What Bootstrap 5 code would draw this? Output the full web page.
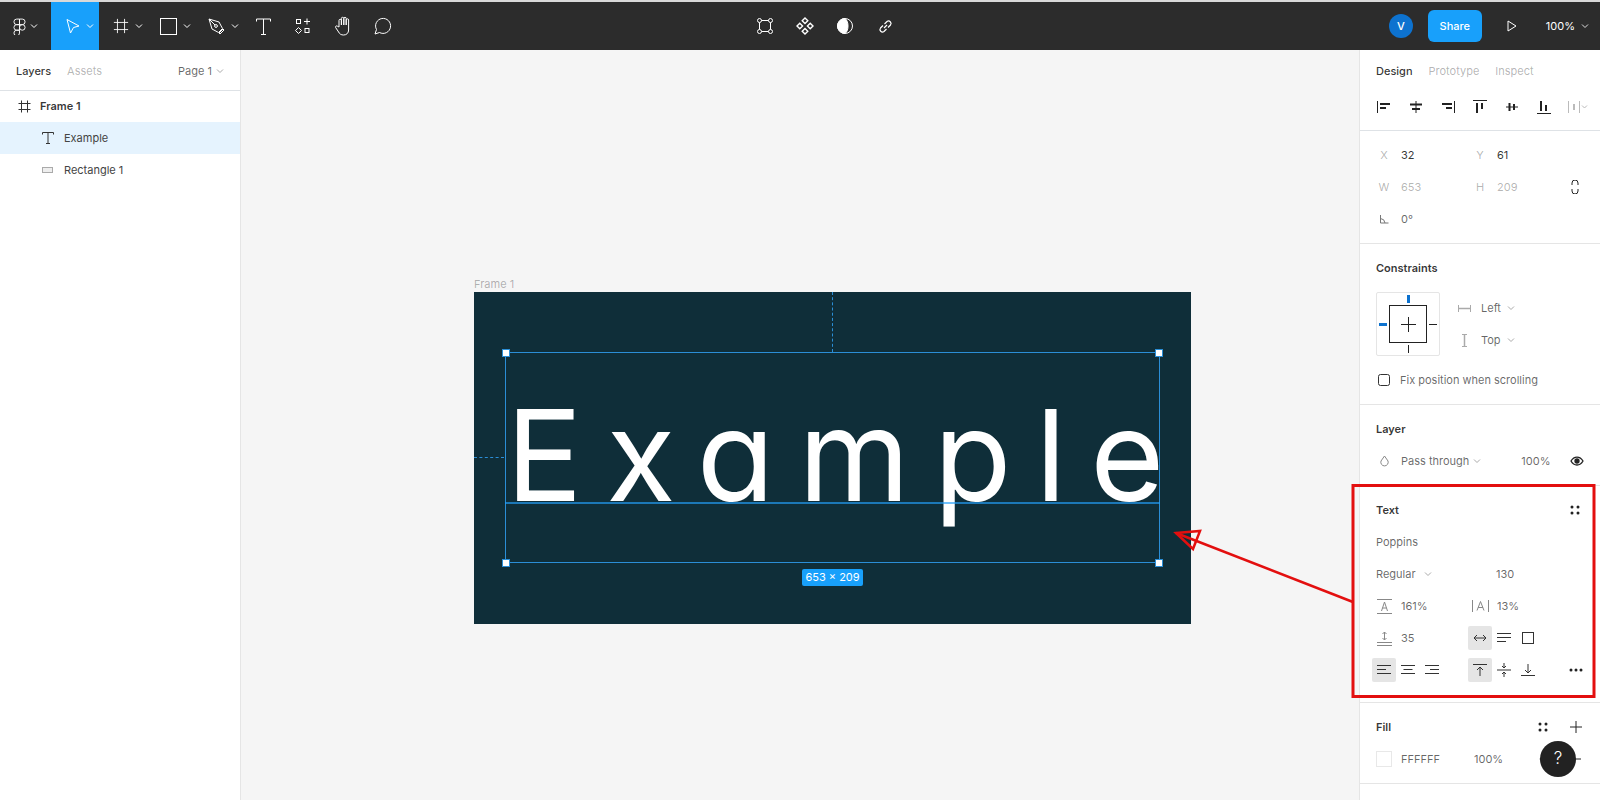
<!DOCTYPE html>
<html lang="en">
<head>
<meta charset="UTF-8">
<title>Figma - Text</title>
<link href="https://cdn.jsdelivr.net/npm/bootstrap@5.3.3/dist/css/bootstrap.min.css" rel="stylesheet">
<script src="https://cdn.jsdelivr.net/npm/bootstrap@5.3.3/dist/js/bootstrap.bundle.min.js"></script>
<style>
    html, body { height: 100%; overflow: hidden; }
    body { font-family: Inter, "Liberation Sans", sans-serif; font-size: 11px; color: rgba(0,0,0,.8); background: #fff; position: relative; }
    svg { display: block; flex: none; }
    .top-line { height: 2px; background: #d9d9d9; }
    .toolbar { height: 48px; background: #2c2c2c; color: #fff; }
    .tool { height: 48px; display: flex; align-items: center; justify-content: center; gap: 4px; }
    .tool-w { width: 48px; justify-content: flex-start; padding-left: 13px; gap: 6px; }
    .tool-s { width: 40px; }
    .tool-active { background: #18a0fb; padding-left: 14px; gap: 5px; }
    .tools-left { width: 745px; }
    .avatar-dot { width: 24px; height: 24px; border-radius: 50%; background: #0d72cf; color: #fff; font-weight: 500; font-size: 11px; }
    .share-btn { width: 54px; height: 32px; padding: 0; margin-left: 15px; border: 0; border-radius: 6px; background: #18a0fb; color: #fff; font-size: 11px; font-weight: 500; }
    .zoom-val { margin-left: 4px; color: #fff; font-size: 11px; }
    .work { height: 750px; }
    .side-left { width: 241px; border-right: 1px solid #e5e5e5; background: #fff; }
    .side-right { width: 241px; border-left: 1px solid #e5e5e5; background: #fff; }
    .canvas-area { background: #f5f5f5; position: relative; }
    .tabs-row { height: 41px; padding: 2px 0 0 16px; font-weight: 500; }
    .muted-txt { color: rgba(0,0,0,.3); font-weight: 400; }
    .mid-txt { color: rgba(0,0,0,.6); }
    .layer-row { height: 32px; display: flex; align-items: center; }
    .layer-first { height: 31px; padding-bottom: 1px; }
    .layer-sel { background: #e5f3fe; }
    .sect { border-bottom: 1px solid #e5e5e5; padding: 8px 0; }
    .sect-title { height: 32px; padding: 0 16px; display: flex; align-items: center; justify-content: space-between; font-weight: 600; font-size: 11px; }
    .prop-row { height: 32px; display: flex; align-items: center; padding-left: 16px; }
    .c-label { width: 16px; margin-right: 9px; color: rgba(0,0,0,.3); flex: none; display: flex; justify-content: center; }
    .c-val { width: 71px; flex: none; }
    .ic-box { width: 24px; height: 24px; display: flex; align-items: center; justify-content: center; flex: none; border-radius: 2px; }
    .ic-on { background: #e5e5e5; }
    .constraint-box { width: 64px; height: 64px; border: 1px solid #e5e5e5; border-radius: 2px; flex: none; }
    .dim-txt { color: rgba(0,0,0,.3); }
    .swatch { width: 16px; height: 16px; border: 1px solid #e8e8e8; background: #fff; flex: none; }

    /* artboard pieces sit on a free canvas, offsets are relative to the canvas area */
    .frame-name { position: absolute; left: 233px; top: 227px; color: rgba(0,0,0,.3); line-height: 14px; }
    .artboard { position: absolute; left: 233px; top: 242px; width: 717px; height: 332px; background: #0f2e39; overflow: hidden; }
    .sample-txt { position: absolute; left: 32px; top: 100px; line-height: 1; color: #fff; font-family: Inter, sans-serif; font-feature-settings: "cv11"; font-size: 127px; font-weight: 400; white-space: nowrap; letter-spacing: 24px; }
    .sel-box { position: absolute; left: 31px; top: 60px; width: 655px; height: 211px; border: 1px solid #2b8ed6; }
    .baseline { position: absolute; left: 31px; top: 210px; width: 655px; height: 2px; background: rgba(36,160,251,.65); }
    .handle { position: absolute; width: 8px; height: 8px; background: #fff; border: 1px solid #2b8ed6; }
    .guide-v { position: absolute; left: 358px; top: 0; height: 60px; border-left: 1px dashed #2b8ed6; }
    .guide-h { position: absolute; left: 0; top: 165px; width: 30px; border-top: 1px dashed #2b8ed6; }
    .size-tag { position: absolute; left: 328px; top: 277px; width: 61px; height: 17px; line-height: 17px; text-align: center; background: #18a0fb; color: #fff; border-radius: 2px; font-size: 11px; }
    .overlay-art { position: absolute; left: 0; top: 0; pointer-events: none; }
    .help-dot { position: absolute; left: 1540px; top: 741px; width: 36px; height: 36px; border-radius: 50%; background: #222; color: #fff; font-size: 17px; font-weight: 300; }
</style>
</head>
<body>
<div class="top-line"></div>

<!-- Toolbar -->
<div class="toolbar d-flex align-items-center">
    <div class="tools-left d-flex">
        <div class="tool" style="width:51px">
            <svg width="13" height="17" viewBox="0 0 14 18" fill="none" stroke="#fff" stroke-width="1"><path d="M7 1H4a3 3 0 0 0 0 6h3zM7 1h3a3 3 0 0 1 0 6H7zM7 7H4a3 3 0 0 0 0 6h3zM13 10a3 3 0 1 1-6 0 3 3 0 0 1 6 0zM7 13H4a3 3 0 1 0 3 3z"/></svg>
            <svg width="8" height="6" viewBox="0 0 8 6" fill="none" stroke="#fff"><path d="M1 1.500l3 3 3-3"/></svg>
        </div>
        <div class="tool tool-w tool-active">
            <svg width="16" height="16" viewBox="0 0 16 16" fill="none" stroke="#fff"><path d="M2 1.500l12 6.500-5.500 1.500L5.500 15z"/></svg>
            <svg width="8" height="6" viewBox="0 0 8 6" fill="none" stroke="#fff"><path d="M1 1.500l3 3 3-3"/></svg>
        </div>
        <div class="tool tool-w" style="padding-left:14px">
            <svg width="16" height="16" viewBox="0 0 18 18" fill="none" stroke="#fff"><path d="M5 1v16M13 1v16M1 5h16M1 13h16"/></svg>
            <svg width="8" height="6" viewBox="0 0 8 6" fill="none" stroke="#fff"><path d="M1 1.500l3 3 3-3"/></svg>
        </div>
        <div class="tool tool-w">
            <svg width="17" height="17" viewBox="0 0 17 17" fill="none" stroke="#fff"><rect x=".5" y=".5" width="16" height="16"/></svg>
            <svg width="8" height="6" viewBox="0 0 8 6" fill="none" stroke="#fff"><path d="M1 1.500l3 3 3-3"/></svg>
        </div>
        <div class="tool tool-w">
            <svg width="17" height="17" viewBox="0 0 17 17" fill="none" stroke="#fff"><path d="M1 1l10 3 3.500 6.500-4 4L4 11zM1 1l6 6"/><circle cx="8" cy="8" r="1.400"/><path d="M11 15l4-4 1 1-4 4z"/></svg>
            <svg width="8" height="6" viewBox="0 0 8 6" fill="none" stroke="#fff"><path d="M1 1.500l3 3 3-3"/></svg>
        </div>
        <div class="tool tool-s">
            <svg width="15" height="17" viewBox="0 0 15 17" fill="none" stroke="#fff"><path d="M.5 3.500V1h14v2.500M7.500 1v15.500M5 16.500h5"/></svg>
        </div>
        <div class="tool tool-s">
            <svg width="16" height="16" viewBox="0 0 16 16" fill="none" stroke="#fff"><rect x="1.500" y="1.500" width="4" height="4"/><path d="M12 .5v6M9 3.500h6M3.500 9.500l3 3-3 3-3-3z"/><rect x="10" y="10.500" width="4" height="4"/></svg>
        </div>
        <div class="tool tool-s">
            <svg width="19" height="20" viewBox="0 0 19 20" fill="none" stroke="#fff"><path d="M5 11V4.500a1.200 1.200 0 0 1 2.400 0V9V2.500a1.200 1.200 0 0 1 2.400 0V9V2.500a1.200 1.200 0 0 1 2.400 0V9V4a1.200 1.200 0 0 1 2.400 0v10c0 3-2 5-5 5-2.500 0-4-1-5-3l-3-4.500c-.6-1.200 1-2.200 2-1.200z"/></svg>
        </div>
        <div class="tool tool-s">
            <svg width="18" height="18" viewBox="0 0 18 18" fill="none" stroke="#fff"><path d="M1 17l1.500-4.500A7.500 7.500 0 1 1 5.500 15.500z"/></svg>
        </div>
    </div>
    <div class="d-flex">
        <div class="tool tool-s">
            <svg width="16" height="16" viewBox="0 0 16 16" fill="none" stroke="#fff"><path d="M2.500 4.500v7M13.500 4.500v7M4.500 2.500h7M4.500 13.500h7"/><circle cx="2.500" cy="2.500" r="2"/><circle cx="13.500" cy="2.500" r="2"/><circle cx="2.500" cy="13.500" r="2"/><circle cx="13.500" cy="13.500" r="2"/></svg>
        </div>
        <div class="tool tool-s">
            <svg width="18" height="18" viewBox="0 0 18 18" fill="none" stroke="#fff" stroke-width="1.400"><path d="M9 1l2.800 2.800L9 6.600 6.200 3.800zM9 11.400l2.800 2.800L9 17l-2.800-2.800zM3.800 6.200L6.600 9l-2.800 2.800L1 9zM14.200 6.200L17 9l-2.800 2.800L11.400 9z"/></svg>
        </div>
        <div class="tool tool-s">
            <svg width="16" height="16" viewBox="0 0 16 16" fill="none" stroke="#fff"><circle cx="8" cy="8" r="7.500"/><path d="M8 .5a7.500 7.500 0 0 0 0 15c2-1.500 3-4 3-7.500S10 2 8 .5z" fill="#fff"/></svg>
        </div>
        <div class="tool tool-s">
            <svg width="15" height="15" viewBox="0 0 15 15" fill="none" stroke="#fff" stroke-width="1.200"><path d="M6 9l3-3M5 6.500L2.500 9a2.500 2.500 0 0 0 3.500 3.500L8.500 10M6.500 5L9 2.500A2.500 2.500 0 0 1 12.500 6L10 8.500"/></svg>
        </div>
    </div>
    <div class="ms-auto d-flex align-items-center">
        <div class="avatar-dot d-flex align-items-center justify-content-center">V</div>
        <button class="btn share-btn" type="button">Share</button>
        <div class="tool" style="width:60px">
            <svg width="10" height="12" viewBox="0 0 10 12" fill="none" stroke="#fff"><path d="M1 1l8 5-8 5z"/></svg>
        </div>
        <div class="zoom-val">100%</div>
        <div style="margin:0 11px 0 6px">
            <svg width="8" height="6" viewBox="0 0 8 6" fill="none" stroke="#ddd"><path d="M1 1.500l3 3 3-3"/></svg>
        </div>
    </div>
</div>

<div class="work d-flex">
    <!-- Layers panel -->
    <div class="side-left flex-none">
        <div class="tabs-row d-flex align-items-center border-bottom">
            <span>Layers</span>
            <span class="muted-txt ms-3">Assets</span>
            <span class="ms-auto mid-txt fw-normal">Page 1</span>
            <svg class="ms-1 me-3" width="8" height="6" viewBox="0 0 8 6" fill="none" stroke="#aaa"><path d="M1 1.500l3 3 3-3"/></svg>
        </div>
        <div class="layer-row layer-first fw-semibold" style="padding-left:18px">
            <svg width="13" height="13" viewBox="0 0 13 13" fill="none" stroke="#333"><path d="M3.500 .5v12M9.500 .5v12M.5 3.500h12M.5 9.500h12"/></svg>
            <span style="margin-left:9px">Frame 1</span>
        </div>
        <div class="layer-row layer-sel" style="padding-left:42px">
            <svg width="12" height="12" viewBox="0 0 12 12" fill="none" stroke="#333"><path d="M.5 2.500V.5h11v2M6 .5v11M4 11.500h4"/></svg>
            <span class="mid-txt" style="margin-left:10px;color:#444">Example</span>
        </div>
        <div class="layer-row" style="padding-left:42px">
            <svg width="12" height="8" viewBox="0 0 12 8" fill="#eee" stroke="#aaa"><rect x=".5" y="1.500" width="10" height="5"/></svg>
            <span style="margin-left:10px;color:#444">Rectangle 1</span>
        </div>
    </div>

    <!-- Canvas -->
    <div class="canvas-area flex-grow-1">
        <div class="frame-name">Frame 1</div>
        <div class="artboard">
            <div class="sample-txt">Example</div>
            <div class="guide-v"></div>
            <div class="guide-h"></div>
            <div class="sel-box"></div>
            <div class="baseline"></div>
            <div class="handle" style="left:28px;top:57px"></div>
            <div class="handle" style="left:681px;top:57px"></div>
            <div class="handle" style="left:28px;top:267px"></div>
            <div class="handle" style="left:681px;top:267px"></div>
            <div class="size-tag">653 × 209</div>
        </div>
    </div>

    <!-- Design panel -->
    <div class="side-right flex-none">
        <div class="tabs-row d-flex align-items-center">
            <span>Design</span>
            <span class="muted-txt" style="margin-left:16px">Prototype</span>
            <span class="muted-txt" style="margin-left:16px">Inspect</span>
        </div>
        <div class="border-bottom d-flex align-items-center" style="height:40px;padding:0 0 8px 17px;gap:18px">
            <svg width="14" height="14" viewBox="0 0 14 14" fill="none" stroke="#222"><path d="M.5 1v12" /><path d="M3 4h10M3 8h6" stroke-width="2"/></svg>
            <svg width="14" height="14" viewBox="0 0 14 14" fill="none" stroke="#222"><path d="M7 1v12"/><path d="M1 4.500h12M3 9h8" stroke-width="2"/></svg>
            <svg width="14" height="14" viewBox="0 0 14 14" fill="none" stroke="#222"><path d="M13.500 1v12"/><path d="M1 4h10M5 8h6" stroke-width="2"/></svg>
            <svg width="14" height="14" viewBox="0 0 14 14" fill="none" stroke="#222"><path d="M0 .5h14"/><path d="M4 3v10M9 3v6" stroke-width="2"/></svg>
            <svg width="14" height="14" viewBox="0 0 14 14" fill="none" stroke="#222"><path d="M1 7h12"/><path d="M4.500 3v8M9 4v6" stroke-width="2"/></svg>
            <svg width="14" height="14" viewBox="0 0 14 14" fill="none" stroke="#222"><path d="M0 13.500h14"/><path d="M4 1v10M9 5v6" stroke-width="2"/></svg>
            <svg width="20" height="14" viewBox="0 0 20 14" fill="none" stroke="#bbb" style="margin-left:-1px"><path d="M.5 1v12M11.500 1v12"/><path d="M6 4v6" stroke-width="2"/><path d="M14 5.500l2.500 2.500 2.500-2.500"/></svg>
        </div>

        <div class="sect">
            <div class="prop-row"><span class="c-label">X</span><span class="c-val">32</span><span class="c-label">Y</span><span>61</span></div>
            <div class="prop-row">
                <span class="c-label">W</span><span class="c-val dim-txt">653</span><span class="c-label">H</span><span class="dim-txt">209</span>
                <svg style="margin-left:53px" width="10" height="14" viewBox="0 0 10 14" fill="none" stroke="#222"><path d="M2 5V3a3 3 0 0 1 6 0v2M2 9v2a3 3 0 0 0 6 0V9"/></svg>
            </div>
            <div class="prop-row">
                <span class="c-label"><svg width="10" height="10" viewBox="0 0 10 10" fill="none" stroke="#777"><path d="M1.500 1v8h8M1.500 4.500A5 5 0 0 1 6 9"/></svg></span><span class="c-val mid-txt">0°</span>
            </div>
        </div>

        <div class="sect">
            <div class="sect-title">Constraints</div>
            <div class="d-flex" style="padding-left:16px;height:64px;margin-top:8px">
                <div class="constraint-box">
                    <svg width="62" height="62" viewBox="0 0 62 62" fill="none" stroke="#222">
                        <rect x="12.500" y="12.500" width="37" height="37"/>
                        <path d="M31.500 24v15M24 31.500h15M52 31.500h8M31.500 52v8"/>
                        <path d="M31.500 2v8M2 31.500h8" stroke="#0d72cf" stroke-width="3"/>
                    </svg>
                </div>
                <div style="margin-left:18px">
                    <div class="d-flex align-items-center" style="height:32px">
                        <svg width="13" height="9" viewBox="0 0 13 9" fill="none" stroke="#aaa"><path d="M.5 1v7M12.500 1v7"/><path d="M1 4.500h11" stroke-width="1.500"/></svg>
                        <span class="mid-txt" style="margin-left:10px">Left</span>
                        <svg style="margin-left:6px" width="8" height="6" viewBox="0 0 8 6" fill="none" stroke="#aaa"><path d="M1 1.500l3 3 3-3"/></svg>
                    </div>
                    <div class="d-flex align-items-center" style="height:32px">
                        <svg width="13" height="13" viewBox="0 0 13 13" fill="none" stroke="#aaa"><path d="M4 .5h5M4 12.500h5"/><path d="M6.500 1v11" stroke-width="1.500"/></svg>
                        <span class="mid-txt" style="margin-left:10px">Top</span>
                        <svg style="margin-left:6px" width="8" height="6" viewBox="0 0 8 6" fill="none" stroke="#aaa"><path d="M1 1.500l3 3 3-3"/></svg>
                    </div>
                </div>
            </div>
            <div class="prop-row" style="padding-left:18px;margin-top:8px">
                <svg width="12" height="12" viewBox="0 0 12 12" fill="none" stroke="#333"><rect x=".5" y=".5" width="11" height="11" rx="2"/></svg>
                <span class="mid-txt" style="margin-left:10px">Fix position when scrolling</span>
            </div>
        </div>

        <div class="sect">
            <div class="sect-title">Layer</div>
            <div class="prop-row">
                <span class="c-label"><svg width="9" height="12" viewBox="0 0 9 12" fill="none" stroke="#888"><path d="M4.500 1L8 6a3.700 3.700 0 1 1-7 0z"/></svg></span>
                <span class="mid-txt">Pass through</span>
                <svg style="margin-left:4px" width="8" height="6" viewBox="0 0 8 6" fill="none" stroke="#aaa"><path d="M1 1.500l3 3 3-3"/></svg>
                <span class="mid-txt" style="margin-left:40px">100%</span>
                <svg style="margin-left:20px" width="14" height="10" viewBox="0 0 14 10" fill="none" stroke="#222" stroke-width="1.300"><path d="M1 5c3-5.300 9-5.300 12 0-3 5.300-9 5.300-12 0z"/><circle cx="7" cy="5" r="2" fill="#222"/></svg>
            </div>
        </div>

        <div class="sect" style="padding-bottom:16px">
            <div class="sect-title">Text
                <svg width="10" height="10" viewBox="0 0 10 10" fill="#222" style="margin-right:4px"><circle cx="2" cy="2" r="1.500"/><circle cx="8" cy="2" r="1.500"/><circle cx="2" cy="8" r="1.500"/><circle cx="8" cy="8" r="1.500"/></svg>
            </div>
            <div class="prop-row mid-txt">Poppins</div>
            <div class="prop-row">
                <span class="mid-txt d-flex align-items-center" style="width:120px">Regular
                    <svg class="ms-2" width="8" height="6" viewBox="0 0 8 6" fill="none" stroke="#aaa"><path d="M1 1.500l3 3 3-3"/></svg></span>
                <span class="mid-txt">130</span>
            </div>
            <div class="prop-row">
                <span class="c-label"><svg width="15" height="15" viewBox="0 0 15 15" fill="none" stroke="#888"><path d="M0 .5h15M0 14.500h15M4.500 12l3-9 3 9M5.500 9h4"/></svg></span>
                <span class="c-val mid-txt">161%</span>
                <span class="c-label"><svg width="17" height="12" viewBox="0 0 17 12" fill="none" stroke="#888"><path d="M.5 0v12M16.500 0v12M5 10.500l3.500-9 3.500 9M6 7.500h5"/></svg></span>
                <span class="mid-txt">13%</span>
            </div>
            <div class="prop-row">
                <span class="c-label"><svg width="15" height="15" viewBox="0 0 15 15" fill="none" stroke="#888"><path d="M0 11.500h15M0 14.500h15M7.500 1v8M5.500 3l2-2 2 2M5.500 7l2 2 2-2"/></svg></span>
                <span class="c-val mid-txt">35</span>
                <div class="d-flex align-items-center" style="margin-left:-4px">
                    <div class="ic-box ic-on"><svg width="14" height="8" viewBox="0 0 14 8" fill="none" stroke="#333"><path d="M1 4h12M4 1L1 4l3 3M10 1l3 3-3 3"/></svg></div>
                    <div class="ic-box"><svg width="14" height="10" viewBox="0 0 14 10" fill="none" stroke="#333"><path d="M0 .5h14M0 4.500h14M0 8.500h9"/></svg></div>
                    <div class="ic-box"><svg width="12" height="12" viewBox="0 0 12 12" fill="none" stroke="#333"><rect x=".5" y=".5" width="11" height="11"/></svg></div>
                </div>
            </div>
            <div class="prop-row" style="padding-left:12px">
                <div class="d-flex align-items-center" style="width:96px">
                    <div class="ic-box ic-on"><svg width="14" height="10" viewBox="0 0 14 10" fill="none" stroke="#333"><path d="M0 .5h14M0 4.500h9M0 8.500h14"/></svg></div>
                    <div class="ic-box"><svg width="14" height="10" viewBox="0 0 14 10" fill="none" stroke="#333"><path d="M0 .5h14M2.500 4.500h9M0 8.500h14"/></svg></div>
                    <div class="ic-box"><svg width="14" height="10" viewBox="0 0 14 10" fill="none" stroke="#333"><path d="M0 .5h14M5 4.500h9M0 8.500h14"/></svg></div>
                </div>
                <div class="ic-box ic-on"><svg width="14" height="12" viewBox="0 0 14 12" fill="none" stroke="#333"><path d="M0 .5h14M7 3v9M4 6l3-3 3 3"/></svg></div>
                <div class="ic-box"><svg width="14" height="14" viewBox="0 0 14 14" fill="none" stroke="#333"><path d="M0 7h14M7 0v5M5 3l2 2 2-2M7 14V9M5 11l2-2 2 2"/></svg></div>
                <div class="ic-box"><svg width="14" height="12" viewBox="0 0 14 12" fill="none" stroke="#333"><path d="M0 11.500h14M7 0v9M4 6l3 3 3-3"/></svg></div>
                <svg style="margin-left:29px" width="14" height="4" viewBox="0 0 14 4" fill="#222"><circle cx="2" cy="2" r="1.500"/><circle cx="7" cy="2" r="1.500"/><circle cx="12" cy="2" r="1.500"/></svg>
            </div>
        </div>

        <div class="sect">
            <div class="sect-title">Fill
                <div class="d-flex align-items-center" style="gap:22px;margin-right:2px">
                    <svg width="10" height="10" viewBox="0 0 10 10" fill="#222"><circle cx="2" cy="2" r="1.500"/><circle cx="8" cy="2" r="1.500"/><circle cx="2" cy="8" r="1.500"/><circle cx="8" cy="8" r="1.500"/></svg>
                    <svg width="12" height="12" viewBox="0 0 12 12" fill="none" stroke="#222"><path d="M6 0v12M0 6h12"/></svg>
                </div>
            </div>
            <div class="prop-row">
                <div class="swatch"></div>
                <span class="mid-txt" style="margin-left:9px;width:73px">FFFFFF</span>
                <span class="mid-txt">100%</span>
                <svg style="margin-left:36px" width="14" height="10" viewBox="0 0 14 10" fill="none" stroke="#222"><path d="M1 5c3-5.300 9-5.300 12 0-3 5.300-9 5.300-12 0z"/></svg>
                <svg style="margin-left:16px" width="12" height="2" viewBox="0 0 12 2" stroke="#222"><path d="M0 1h12"/></svg>
            </div>
        </div>
    </div>
</div>

<!-- Annotation drawn on top of the screenshot -->
<svg class="overlay-art" width="1600" height="800" viewBox="0 0 1600 800" fill="none" stroke="#e30f0f">
    <rect x="1353" y="485.500" width="241" height="211" stroke-width="3"/>
    <path d="M1353 602L1176 533" stroke-width="2.500"/>
    <path d="M1176 533l24-2-7 18z" stroke-width="2.500"/>
</svg>

<div class="help-dot d-flex align-items-center justify-content-center">?</div>
</body>
</html>
